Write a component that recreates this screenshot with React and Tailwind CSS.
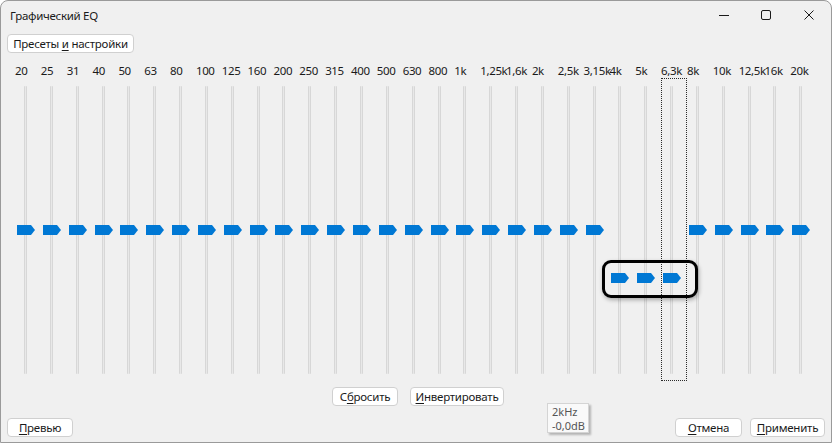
import React from 'react'

const bands = ['20', '25', '31', '40', '50', '63', '80', '100', '125', '160', '200', '250', '315', '400', '500', '630', '800', '1k', '1,25k', '1,6k', '2k', '2,5k', '3,15k', '4k', '5k', '6,3k', '8k', '10k', '12,5k', '16k', '20k']

// bands pulled down in the reference
const lowered = [23, 24, 25]
const focused = 25

const Thumb = ({ low }) => (
  <svg
    width="18"
    height="10"
    viewBox="0 0 18 10"
    className={`absolute left-[2px] ${low ? 'top-[195px]' : 'top-[147px]'}`}
  >
    <polygon points="0,0 14,0 18,5 14,10 0,10" fill="#0078d4" />
  </svg>
)

const Band = ({ label, index }) => (
  <div className="w-[25.85px] shrink-0 flex flex-col">
    <div className="h-[15px] leading-[15px] whitespace-nowrap text-[11.5px] tracking-[-0.35px]">{label}</div>
    <div
      className={`relative h-[303px] ${index === focused ? 'outline-1 outline-dotted outline-offset-[-1px] outline-[#2a2a2a]' : ''}`}
    >
      <div className="ml-[9px] mt-[8px] w-[3px] h-[288px] bg-[#e8e8e8] border-x border-[#d7d7d7] rounded-[1px]" />
      <Thumb low={lowered.includes(index)} />
    </div>
  </div>
)

const Btn = ({ children, className = '' }) => (
  <button
    className={`h-[19px] bg-white border border-[#d0d0d0] rounded-[4px] text-[11.5px] tracking-[-0.25px] leading-[17px] text-[#1a1a1a] flex items-center justify-center ${className}`}
  >
    {children}
  </button>
)

export default function App() {
  return (
    <div
      className="w-[832px] h-[443px] bg-white"
      style={{ fontFamily: '"Segoe UI", "Noto Sans", sans-serif' }}
    >
      <div className="relative w-full h-full bg-[#f0f0f0] rounded-t-[8px] border border-[#9a9a9a] flex flex-col text-[12px] text-[#1a1a1a]">
        {/* title bar */}
        <div className="h-[28px] flex items-center pl-[9px]">
          <span className="flex-1 pt-[1px] text-[11.5px] tracking-[-0.3px]">Графический EQ</span>
          <div className="flex items-center h-full">
            <div className="w-[42px] h-full flex items-center justify-center">
              <svg width="10" height="10" viewBox="0 0 10 10">
                <path d="M0 5.5h10" stroke="#1a1a1a" strokeWidth="1" />
              </svg>
            </div>
            <div className="w-[42px] h-full flex items-center justify-center">
              <svg width="10" height="10" viewBox="0 0 10 10">
                <rect x="0.5" y="0.5" width="9" height="9" rx="1.5" fill="none" stroke="#1a1a1a" strokeWidth="1" />
              </svg>
            </div>
            <div className="w-[44px] h-full flex items-center justify-center">
              <svg width="10" height="10" viewBox="0 0 10 10">
                <path d="M0.5 0.5l9 9M9.5 0.5l-9 9" stroke="#1a1a1a" strokeWidth="1" />
              </svg>
            </div>
          </div>
        </div>

        {/* presets */}
        <div className="pt-[5px] pl-[6px]">
          <Btn className="w-[127px]">
            <span>
              Пресеты <u className="underline-offset-2">и</u> настройки
            </span>
          </Btn>
        </div>

        {/* equalizer */}
        <div className="relative mt-[10px] pl-[14px] flex">
          {bands.map((b, i) => (
            <Band key={b} label={b} index={i} />
          ))}
          <div className="absolute left-[601px] top-[197px] w-[96px] h-[38px] border-[3px] border-black rounded-[9px] shadow-[1px_2px_4px_rgba(0,0,0,0.3)]" />
        </div>

        {/* reset / invert */}
        <div className="mt-[6px] pl-[4px] flex justify-center gap-[12px]">
          <Btn className="w-[66px]">
            <span>
              С<u className="underline-offset-2">б</u>росить
            </span>
          </Btn>
          <Btn className="w-[94px]">
            <span>
              <u className="underline-offset-2">И</u>нвертировать
            </span>
          </Btn>
        </div>

        {/* footer */}
        <div className="mt-[12px] px-[6px] flex justify-between">
          <Btn className="w-[66px]">
            <span>
              <u className="underline-offset-2">П</u>ревью
            </span>
          </Btn>
          <div className="flex gap-[8px]">
            <Btn className="w-[67px]">
              <span>
                <u className="underline-offset-2">О</u>тмена
              </span>
            </Btn>
            <Btn className="w-[75px] border-[#0067c0]">
              <span>
                <u className="underline-offset-2">П</u>рименить
              </span>
            </Btn>
          </div>
        </div>

        {/* value tooltip */}
        <div className="absolute left-[546px] top-[402px] w-[42px] h-[30px] bg-[#f9f9f9] border border-[#d4d4d4] shadow-[2px_2px_2px_rgba(0,0,0,0.25)] pl-[4px] pt-[1px] text-[11px] leading-[14px] text-[#555]">
          <div>2kHz</div>
          <div>-0,0dB</div>
        </div>
      </div>
    </div>
  )
}
